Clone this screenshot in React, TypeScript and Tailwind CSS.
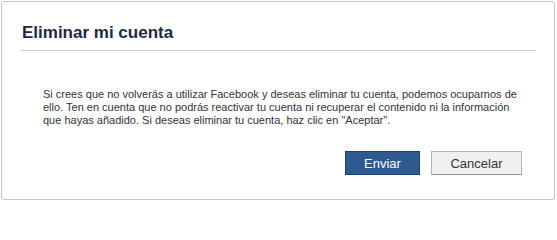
export default function App() {
  return (
    <div className="w-[557px] h-[202px] bg-white p-[1px]" style={{ fontFamily: '"Liberation Sans", Arial, sans-serif' }}>
      <div className="w-[554px] h-[199px] border border-[#c6c6c6] rounded-[3px] bg-white flex flex-col">
        {/* Header */}
        <div className="pt-[21px] px-[19px]">
          <h2 className="text-[17px] leading-[20px] font-bold text-[#1c2a47] pl-[1px]">Eliminar mi cuenta</h2>
          <div className="mt-[7px] h-px bg-[#cccccc] mr-[-1px]" />
        </div>

        {/* Body */}
        <div className="mt-[37px] pl-[41px] text-[11px] leading-[13px] text-[#333333] whitespace-nowrap">
          Si crees que no volverás a utilizar Facebook y deseas eliminar tu cuenta, podemos ocuparnos de
          <br />
          ello. Ten en cuenta que no podrás reactivar tu cuenta ni recuperar el contenido ni la información
          <br />
          que hayas añadido. Si deseas eliminar tu cuenta, haz clic en "Aceptar".
        </div>

        {/* Buttons */}
        <div className="mt-[24px] pr-[32px] flex justify-end gap-[11px]">
          <button className="w-[75px] h-[24px] bg-[#2e5b8f] border border-[#1d4272] text-white text-[13px] leading-none">
            Enviar
          </button>
          <button className="w-[91px] h-[24px] bg-[#f0f0f0] border border-[#b3b3b3] border-b-[#8a8a8a] text-[#333333] text-[13px] leading-none">
            Cancelar
          </button>
        </div>
      </div>
    </div>
  );
}
